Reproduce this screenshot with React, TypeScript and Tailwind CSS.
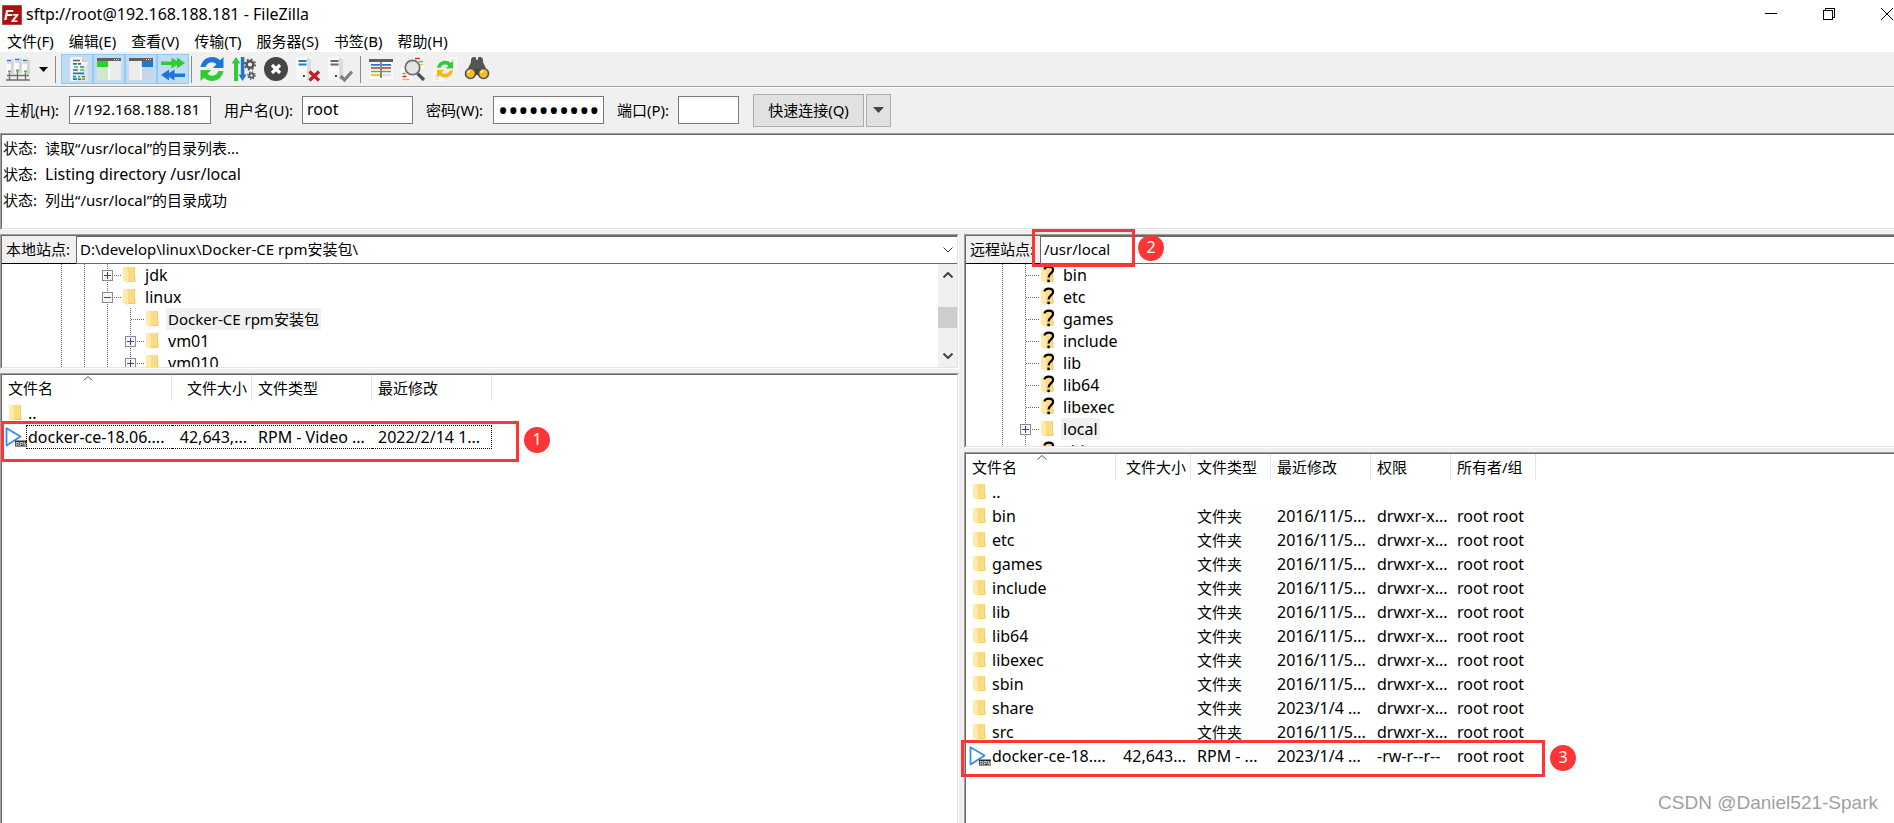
import type { ReactNode } from "react";

const menus = ["文件(F)", "编辑(E)", "查看(V)", "传输(T)", "服务器(S)", "书签(B)", "帮助(H)"];

const logLines = ["读取“/usr/local”的目录列表...", "Listing directory /usr/local", "列出“/usr/local”的目录成功"];

type Guide = "bar" | "tee" | "plus" | "minus";
type Node = { name: string; guides: Guide[]; unknown?: boolean; selected?: boolean };

const localTree: Node[] = [
  { name: "jdk", guides: ["bar", "bar", "plus"] },
  { name: "linux", guides: ["bar", "bar", "minus"] },
  { name: "Docker-CE rpm安装包", guides: ["bar", "bar", "bar", "tee"], selected: true },
  { name: "vm01", guides: ["bar", "bar", "bar", "plus"] },
  { name: "vm010", guides: ["bar", "bar", "bar", "plus"] },
];

const remoteTree: Node[] = [
  { name: "bin", guides: ["bar", "tee"], unknown: true },
  { name: "etc", guides: ["bar", "tee"], unknown: true },
  { name: "games", guides: ["bar", "tee"], unknown: true },
  { name: "include", guides: ["bar", "tee"], unknown: true },
  { name: "lib", guides: ["bar", "tee"], unknown: true },
  { name: "lib64", guides: ["bar", "tee"], unknown: true },
  { name: "libexec", guides: ["bar", "tee"], unknown: true },
  { name: "local", guides: ["bar", "plus"], selected: true },
  { name: "sbin", guides: ["bar", "tee"], unknown: true },
];

type Column = { label: string; width: string; right?: boolean };

const localColumns: Column[] = [
  { label: "文件名", width: "w-[170px]" },
  { label: "文件大小", width: "w-20", right: true },
  { label: "文件类型", width: "w-[120px]" },
  { label: "最近修改", width: "w-[120px]" },
];

const remoteColumns: Column[] = [
  { label: "文件名", width: "w-[150px]" },
  { label: "文件大小", width: "w-[75px]", right: true },
  { label: "文件类型", width: "w-20" },
  { label: "最近修改", width: "w-[100px]" },
  { label: "权限", width: "w-20" },
  { label: "所有者/组", width: "w-[85px]" },
];

const localFiles = [
  ["..", "", "", ""],
  ["docker-ce-18.06....", "42,643,...", "RPM - Video ...", "2022/2/14 1..."],
];

const dir = (name: string, date = "2016/11/5...") => [name, "", "文件夹", date, "drwxr-x...", "root root"];

const remoteFiles = [
  ["..", "", "", "", "", ""],
  dir("bin"),
  dir("etc"),
  dir("games"),
  dir("include"),
  dir("lib"),
  dir("lib64"),
  dir("libexec"),
  dir("sbin"),
  dir("share", "2023/1/4 ..."),
  dir("src"),
  ["docker-ce-18....", "42,643...", "RPM - ...", "2023/1/4 ...", "-rw-r--r--", "root root"],
];

// Latin text is set one size up so that it sits well beside the CJK glyphs
const textSize = (s: string) => (/^[ -~]*$/.test(s) ? "text-base" : "text-[15px]");

function Folder({ unknown }: { unknown?: boolean }) {
  return (
    <svg width="14" height="18" viewBox="0 0 14 18" className="shrink-0 overflow-visible">
      <path d="M3 1h9v10h.5v5H3z" fill="#f5cf6b" />
      <path d="M3 1h8v14H3z" fill="#fbdc83" />
      <path d="M0 1h1.5L5 3.5V17.5L0 15z" fill="#ffeaa7" />
      {unknown && (
        <g>
          <path d="M3.6 3.6C3.6 1.8 5 .7 7.7 .7c2.8 0 4.4 1.3 4.4 3.3 0 3-4.5 3.3-4.5 7.6" fill="none" stroke="#000" strokeWidth="2.2" />
          <path d="M6.4 13.6h2.4v2.6H6.4z" />
        </g>
      )}
    </svg>
  );
}

function RpmFile() {
  return (
    <svg width="22" height="22" viewBox="0 0 22 22" className="shrink-0">
      <path d="M1.500 2.2 L15.500 10.5 L1.500 19.6z" fill="#fff" stroke="#3a8ee6" strokeWidth="1.8" strokeLinejoin="round" />
      <rect x="10" y="14.5" width="12" height="6" fill="#2b2b2b" />
      <text x="10.5" y="19.6" fontSize="5.5" fontWeight="700" fill="#ddd" fontFamily="Liberation Sans, sans-serif">RPM</text>
    </svg>
  );
}

function TreeGuide({ kind }: { kind: Guide }) {
  const dots = { stroke: "#6e6e6e", strokeWidth: 1, strokeDasharray: "1 1" };
  return (
    <svg width="23" height="22" viewBox="0 0 23 22" shapeRendering="crispEdges" className="shrink-0 overflow-visible">
      <path d="M11.5 0v22" {...dots} />
      {kind !== "bar" && <path d="M12 11.5h13" {...dots} />}
      {(kind === "plus" || kind === "minus") && (
        <g>
          <rect x="6.5" y="6.5" width="10" height="10" fill="#f7f7f7" stroke="#8a8a8a" />
          <path d={kind === "plus" ? "M8 11.5h7M11.5 8v7" : "M8 11.5h7"} stroke="#2f4a94" />
        </g>
      )}
    </svg>
  );
}

function Tree({ nodes, className }: { nodes: Node[]; className: string }) {
  return (
    <ul className={`flex-1 ${className}`}>
      {nodes.map((n) => (
        <li key={n.name} className="flex h-[22px] items-center whitespace-nowrap">
          {n.guides.map((g, i) => (
            <TreeGuide key={i} kind={g} />
          ))}
          <span className="ml-1 mr-1.5 flex">
            <Folder unknown={n.unknown} />
          </span>
          <span className={`px-0.5 leading-[22px] ${textSize(n.name)} ${n.selected ? "bg-[#f0f0f0]" : ""}`}>{n.name}</span>
        </li>
      ))}
    </ul>
  );
}

// Sunken 3D frame used around every pane
function Pane({ children, className = "" }: { children: ReactNode; className?: string }) {
  return (
    <div className={`flex flex-col border border-b-white border-l-[#a0a0a0] border-r-white border-t-[#a0a0a0] ${className}`}>
      <div className="relative flex min-h-0 flex-1 flex-col border border-b-[#e3e3e3] border-l-[#696969] border-r-[#e3e3e3] border-t-[#696969] bg-white">
        {children}
      </div>
    </div>
  );
}

function SiteBar({ id, label, path }: { id: string; label: string; path: string }) {
  return (
    <div className="flex h-7 shrink-0">
      <label htmlFor={id} className="w-[74px] shrink-0 overflow-hidden whitespace-nowrap border-b border-black bg-[#f0f0f0] pl-1 leading-[26px]">
        {label}
      </label>
      <div className="relative flex flex-1 border-b border-l border-t border-[#696969]">
        <select id={id} className="w-full appearance-none bg-white pb-0.5 pl-[3px] outline-none">
          <option>{path}</option>
        </select>
        <svg width="10" height="6" viewBox="0 0 10 6" className="pointer-events-none absolute right-1 top-2.5" fill="none" stroke="#444">
          <path d="M.5 .5 5 5 9.5 .5" />
        </svg>
      </div>
    </div>
  );
}

function FileTable({ columns, rows, focused }: { columns: Column[]; rows: string[][]; focused?: boolean }) {
  return (
    <table className="w-0 table-fixed border-separate border-spacing-0 whitespace-nowrap">
      <thead>
        <tr className="h-[26px]">
          {columns.map((c, i) => (
            <th key={c.label} className={`relative border-r border-[#e5e5e5] py-0 pl-1.5 pr-1 font-normal ${c.width} ${c.right ? "text-right" : "text-left"}`}>
              {i === 0 && (
                <svg width="10" height="5" viewBox="0 0 10 5" className="absolute left-1/2 top-px -ml-1" fill="none" stroke="#555">
                  <path d="M.5 4.5 5 .5 9.5 4.5" />
                </svg>
              )}
              {c.label}
            </th>
          ))}
        </tr>
      </thead>
      <tbody>
        {rows.map((r) => {
          const isFile = r[0].startsWith("docker");
          const outlined = focused && isFile;
          return (
            <tr key={r[0]} className="h-6">
              {r.map((cell, i) =>
                i === 0 ? (
                  <td key={i} className="p-0">
                    <div className="flex h-6 items-center">
                      <span className={isFile ? "flex w-6 shrink-0 pl-[3px]" : "flex w-6 shrink-0 pl-[7px]"}>{isFile ? <RpmFile /> : <Folder />}</span>
                      <span
                        className={`flex-1 ${textSize(cell)} ${
                          outlined ? "border-y border-l border-dotted border-black pl-px leading-[22px]" : "pl-0.5 leading-6"
                        }`}
                      >
                        {cell}
                      </span>
                    </div>
                  </td>
                ) : (
                  <td key={i} className="p-0">
                    <div
                      className={`h-6 pl-1.5 ${textSize(cell)} ${columns[i].right ? "pr-[5px] text-right" : ""} ${
                        outlined ? "border-y border-dotted border-black leading-[22px]" : "leading-6"
                      } ${outlined && i === r.length - 1 ? "border-r" : ""}`}
                    >
                      {cell}
                    </div>
                  </td>
                )
              )}
            </tr>
          );
        })}
      </tbody>
    </table>
  );
}

function Mark({ n, box, dot }: { n: number; box: string; dot: string }) {
  return (
    <>
      <div className={`pointer-events-none absolute z-10 border-[3px] border-[#fc3636] ${box}`} />
      <span className={`absolute z-10 flex size-[26px] items-center justify-center rounded-full bg-[#fc3636] pb-0.5 text-base leading-none text-white ${dot}`}>{n}</span>
    </>
  );
}

const G = "#2fcc33";
const B = "#1c78d4";

function Icon({ children }: { children: ReactNode }) {
  return (
    <svg width="26" height="26" viewBox="0 0 26 26" fill="none" className="shrink-0">
      {children}
    </svg>
  );
}

const SiteManagerIcon = () => (
  <Icon>
    {[1, 9, 17].map((x, i) => (
      <g key={x} transform={`translate(0 ${i === 1 ? 0 : 1})`}>
        <path d={`M${x} 1h5l3 2v14h-8z`} fill="#fafafa" />
        <path d={`M${x + 5} 1l3 2v14h-3z`} fill="#d6d6d6" />
        <path d={`M${x + 1} 3.5h4`} stroke={B} strokeWidth="1.6" />
        <path d={`M${x + 1} 6h4`} stroke="#9cc4ec" />
      </g>
    ))}
    <path d="M4.500 17v7M12.500 15v9M20.500 17v7M2 19.500h22M1 24h24" stroke="#707070" strokeWidth="1.4" />
    <path d="M3 15.500h3M11 14.500h3M19 15.500h3" stroke={G} strokeWidth="2" />
  </Icon>
);

const LogIcon = () => (
  <Icon>
    <g transform="translate(3 0)">
      <path d="M3 1h12l6 5v19H3z" fill="#f4f4f4" />
      <path d="M15 1v5h6z" fill="#cfcfcf" />
      <path d="M21 6v19H9z" fill="#e2e2e2" />
      <path d="M6 4.500h7M11 7.800h3M6 14h5" stroke="#606060" strokeWidth="1.700" />
      <path d="M6 7.800h4M13 11h4M6 17.300h11M6 20.600h3M6 23.200h4" stroke={B} strokeWidth="1.700" />
      <path d="M7 11h4M13 14h4M11 20.600h2M15 23.200h3" stroke={G} strokeWidth="1.700" />
      <path d="M15 20.600h3M11 23.200h3" stroke="#606060" strokeWidth="1.400" />
    </g>
  </Icon>
);

const LocalTreeIcon = () => (
  <Icon>
    <path d="M1 2h24v22H1z" fill="#ececec" />
    <path d="M1 2h24v3H1z" fill="#606060" />
    <path d="M18 3.500h5" stroke="#ddd" strokeDasharray="1 1" />
    <path d="M1 5h12v6H1z" fill={G} />
    <path d="M1 11h12v13H1z" fill="#cfe8cf" />
    <path d="M13 5v19" stroke="#fff" strokeWidth="1.500" />
  </Icon>
);

const RemoteTreeIcon = () => (
  <Icon>
    <path d="M1 2h24v22H1z" fill="#ececec" />
    <path d="M1 2h24v3H1z" fill="#606060" />
    <path d="M18 3.500h5" stroke="#ddd" strokeDasharray="1 1" />
    <path d="M13 5h12v6H13z" fill={B} />
    <path d="M13 11h12v13H13z" fill="#c5d6e8" />
    <path d="M13 5v19" stroke="#fff" strokeWidth="1.500" />
  </Icon>
);

const QueueIcon = () => (
  <Icon>
    <path d="M1 5.500h10.500V1.500L17 5V1.500L25 7l-8 5.500V9l-5.500 3.500V9H1z" fill={G} />
    <path d="M25 17.500H14.500v-4L9 17v-3.500L1 19l8 5.500V21l5.500 3.500V21H25z" fill={B} />
  </Icon>
);

const RefreshArrows = ({ top = B, bottom = G }) => (
  <g>
    <path d="M1.500 11C3 4.500 7.500 1 13 1c3.200 0 5.800 1.200 8 3.200L24.500 1v11H13.800l3.700-3.700C16 7 14.700 6.300 13 6.300c-3.200 0-5.300 1.700-6.500 4.700z" fill={top} />
    <path d="M24.500 15C23 21.500 18.500 25 13 25c-3.200 0-5.800-1.200-8-3.200L1.500 25V14h10.700l-3.700 3.700c1.500 1.300 2.800 2 4.500 2 3.200 0 5.300-1.700 6.500-4.700z" fill={bottom} />
  </g>
);

const ProcessIcon = () => (
  <Icon>
    <path d="M5 1l4.500 6.500H7V25H3V7.500H.500z" fill={G} />
    <path d="M11.500 25L7.500 18.500h2.300V1h3.600v17.500h2.300z" fill={B} />
    <circle cx="19" cy="8.500" r="3.300" stroke="#555" strokeWidth="2.400" />
    <circle cx="19" cy="8.500" r="5.100" stroke="#555" strokeWidth="1.800" strokeDasharray="2 2" />
    <circle cx="20.500" cy="19.500" r="2.100" stroke="#555" strokeWidth="1.800" />
    <circle cx="20.500" cy="19.500" r="3.600" stroke="#555" strokeWidth="1.400" strokeDasharray="1.400 1.430" />
  </Icon>
);

const CancelIcon = () => (
  <Icon>
    <circle cx="13" cy="13" r="12" fill="#454545" />
    <path d="M9 9l8 8M17 9l-8 8" stroke="#fff" strokeWidth="3.200" />
  </Icon>
);

const Server = ({ color }: { color: string }) => (
  <g>
    <path d="M1 3l3-2h8v23H1z" fill="#f8f8f8" />
    <path d="M12 1l4 3v20h-4z" fill="#dcdcdc" />
    <path d="M3.500 5h8M3.500 8.500h8" stroke={color} strokeWidth="1.800" />
    <path d="M8 19h2v2H8z" fill="#444" />
  </g>
);

const DisconnectIcon = () => (
  <Icon>
    <Server color={B} />
    <path d="M14.500 15.500l9.500 9M24 15.500l-9.500 9" stroke="#c01f26" strokeWidth="3.200" />
  </Icon>
);

const ReconnectIcon = () => (
  <Icon>
    <Server color="#666" />
    <path d="M13.500 20l4 4 7.500-8.500" stroke="#808080" strokeWidth="3.200" />
  </Icon>
);

const FilterIcon = () => (
  <Icon>
    <path d="M1 3h24v20H1z" fill="#fbfbfb" />
    <path d="M1 3h24v3H1z" fill="#606060" />
    <path d="M3 8.800h9M14 8.800h9" stroke={B} strokeWidth="1.700" />
    <path d="M3 12h9M14 12h9" stroke="#d9262c" strokeWidth="1.700" />
    <path d="M3 15.500h9M14 15.500h9" stroke={G} strokeWidth="1.700" />
    <path d="M3 19h9" stroke="#f5b90f" strokeWidth="1.700" />
    <path d="M14 19h9" stroke="#d9d9d9" strokeWidth="1.500" />
    <path d="M13 5v17" stroke="#606060" strokeWidth="1.500" />
  </Icon>
);

const SearchIcon = () => (
  <Icon>
    <path d="M13 0h11v13H13zM1 12h11v13H1z" fill="#fafafa" />
    <path d="M15 2.500h5M2.500 20.500h4" stroke="#d9262c" strokeWidth="1.600" />
    <path d="M19 5.500h4M2.500 17.500h3" stroke={G} strokeWidth="1.600" />
    <path d="M20 8.500h3M2.500 23.500h7" stroke="#f5b90f" strokeWidth="1.600" />
    <path d="M17.500 17.500L24 24" stroke="#505050" strokeWidth="3.200" />
    <circle cx="12.500" cy="11.500" r="7.200" fill="#e4e4e4" stroke="#6c6c6c" strokeWidth="1.700" />
  </Icon>
);

const CompareIcon = () => (
  <Icon>
    <path d="M14 1h11v12H14zM1 13h11v12H1z" fill="#fafafa" />
    <path d="M3 20h5M3 23h4M19 4h4" stroke="#cfcfcf" />
    <g transform="translate(4 4) scale(.7)">
      <RefreshArrows top={G} bottom="#f5b90f" />
    </g>
  </Icon>
);

const BinocularsIcon = () => (
  <Icon>
    <path d="M7 3l2-2h2.500l1 3h1l1-3H17l2 2v3l6 13H1L7 6z" fill="#555" />
    <path d="M10.500 13h5v6h-5z" fill="#454545" />
    <circle cx="6.500" cy="17.500" r="5" fill="#fcc015" stroke="#505050" strokeWidth="1.600" />
    <circle cx="19.500" cy="17.500" r="5" fill="#fcc015" stroke="#505050" strokeWidth="1.600" />
    <path d="M4 17a2.500 2.500 0 012-2M17 17a2.500 2.500 0 012-2" stroke="#fff" strokeWidth="1.400" />
  </Icon>
);

const toggles = [
  { label: "消息日志", icon: <LogIcon /> },
  { label: "本地目录树", icon: <LocalTreeIcon /> },
  { label: "远程目录树", icon: <RemoteTreeIcon /> },
  { label: "传输队列", icon: <QueueIcon /> },
];

const actions = [
  { label: "刷新", icon: <Icon><RefreshArrows /></Icon> },
  { label: "处理队列", icon: <ProcessIcon /> },
  { label: "取消", icon: <CancelIcon /> },
  { label: "断开", icon: <DisconnectIcon /> },
  { label: "重新连接", icon: <ReconnectIcon /> },
];

const tools = [
  { label: "过滤", icon: <FilterIcon /> },
  { label: "比较", icon: <SearchIcon /> },
  { label: "同步浏览", icon: <CompareIcon /> },
  { label: "搜索", icon: <BinocularsIcon /> },
];

function ToolButton({ label, icon }: { label: string; icon: ReactNode }) {
  return (
    <button aria-label={label} className="flex h-[30px] w-8 items-center justify-center">
      {icon}
    </button>
  );
}

const Divider = () => <span className="h-[27px] w-px bg-[#8c8c8c]" />;

function Titlebar() {
  return (
    <header className="flex h-[29px] items-center pl-0.5">
      <svg width="20" height="20" viewBox="0 0 20 20" fontWeight="700" fontStyle="italic" fontFamily="Liberation Sans, sans-serif">
        <rect x=".5" y=".5" width="19" height="19" fill="#b00d0d" stroke="#8a0808" strokeDasharray="1 1" />
        <text x="2" y="15" fontSize="15" fill="#fff">F</text>
        <text x="9.500" y="16.500" fontSize="14" fill="#fff">z</text>
      </svg>
      <h1 className="flex-1 pb-0.5 pl-1 text-base leading-5">sftp://root@192.168.188.181 - FileZilla</h1>
      <div className="flex gap-[46px] pb-0.5 pr-px">
        <button aria-label="最小化">
          <svg width="12" height="12" stroke="#000" shapeRendering="crispEdges"><path d="M0 5.500h12" /></svg>
        </button>
        <button aria-label="还原">
          <svg width="12" height="12" fill="none" stroke="#000" shapeRendering="crispEdges"><path d="M.5 2.500h9v9h-9zM2.500 2.500v-2h9v9h-2" /></svg>
        </button>
        <button aria-label="关闭">
          <svg width="12" height="12" stroke="#000"><path d="M0 0l12 12M12 0L0 12" /></svg>
        </button>
      </div>
    </header>
  );
}

const inputClass = "h-7 border border-[#7a7a7a] bg-white px-1 outline-none";

function QuickConnect() {
  return (
    <form className="flex h-[45px] items-center border-t border-white pl-[5px]">
      <label htmlFor="host" className="w-16 shrink-0">主机(H):</label>
      <input id="host" defaultValue="//192.168.188.181" className={`${inputClass} w-[142px] pb-0.5`} />
      <label htmlFor="user" className="w-[91px] shrink-0 pl-[13px]">用户名(U):</label>
      <input id="user" defaultValue="root" className={`${inputClass} w-[111px] pb-0.5 text-base`} />
      <label htmlFor="pass" className="w-20 shrink-0 pl-[13px]">密码(W):</label>
      <input id="pass" type="password" defaultValue="0123456789" className={`${inputClass} w-[111px] text-[27px]`} />
      <label htmlFor="port" className="w-[74px] shrink-0 pl-[13px]">端口(P):</label>
      <input id="port" className={`${inputClass} w-[61px]`} />
      <button type="button" className="ml-3.5 h-[33px] w-[111px] border border-[#adadad] bg-[#e1e1e1]">快速连接(Q)</button>
      <button type="button" aria-label="历史记录" className="ml-0.5 flex h-[33px] w-[25px] items-center justify-center border border-[#adadad] bg-[#e1e1e1]">
        <svg width="11" height="6"><path d="M0 0h11L5.500 6z" fill="#444" /></svg>
      </button>
    </form>
  );
}

export default function App() {
  return (
    <div className="relative flex min-h-screen flex-col overflow-hidden bg-[#f0f0f0] font-['Noto_Sans','Noto_Sans_CJK_SC',sans-serif] text-[15px] leading-5 text-black">
      <div className="bg-white">
        <Titlebar />
        <nav className="flex h-[23px] items-center gap-[15px] pl-[7px]">
          {menus.map((m) => (
            <button key={m}>{m}</button>
          ))}
        </nav>
      </div>

      <div className="flex h-[35px] items-center border-b border-[#a0a0a0] pl-[5px]">
        <button aria-label="站点管理器"><SiteManagerIcon /></button>
        <button aria-label="选择站点" className="ml-2 mr-[7px]">
          <svg width="9" height="5"><path d="M0 0h9L4.500 5z" fill="#000" /></svg>
        </button>
        <Divider />
        <div className="ml-[5px] mr-0.5 flex">
          {toggles.map((t) => (
            <button key={t.label} aria-label={t.label} aria-pressed="true" className="flex h-[30px] w-8 items-center justify-center border border-[#90c8f6] bg-[#c0dcf3]">
              {t.icon}
            </button>
          ))}
        </div>
        <Divider />
        <div className="ml-1 mr-1 flex">
          {actions.map((t) => <ToolButton key={t.label} {...t} />)}
        </div>
        <Divider />
        <div className="ml-1 flex">
          {tools.map((t) => <ToolButton key={t.label} {...t} />)}
        </div>
      </div>

      <QuickConnect />

      <Pane className="-mr-5 mt-px h-[97px]">
        <ul>
          {logLines.map((line) => (
            <li key={line} className="flex h-[26px] items-center pl-px">
              <span className="w-[42px]">状态:</span>
              <span className={textSize(line)}>{line}</span>
            </li>
          ))}
        </ul>
      </Pane>

      <main className="-mb-1 -mr-5 mt-1 grid flex-1 grid-cols-[959fr_950fr] gap-x-[5px]">
        <section className="flex flex-col gap-1">
          <Pane className="h-[135px]">
            <SiteBar id="local-site" label="本地站点:" path="D:\develop\linux\Docker-CE rpm安装包\" />
            <div className="flex min-h-0 flex-1 overflow-hidden">
              <Tree nodes={localTree} className="pl-12" />
              <div className="flex w-[19px] flex-col items-center justify-between bg-[#f0f0f0] py-2">
                <svg width="10" height="6" fill="none" stroke="#444" strokeWidth="2"><path d="M.5 5.500 5 1 9.500 5.500" /></svg>
                <span className="mt-1 h-[21px] w-full bg-[#cdcdcd]" />
                <svg width="10" height="6" fill="none" stroke="#444" strokeWidth="2"><path d="M.5 .5 5 5 9.500 .5" /></svg>
              </div>
            </div>
          </Pane>
          <Pane className="flex-1">
            <FileTable columns={localColumns} rows={localFiles} focused />
            <Mark n={1} box="-left-px top-[46px] h-[41px] w-[518px]" dot="left-[522px] top-[52px]" />
          </Pane>
        </section>

        <section className="flex flex-col gap-1">
          <Pane className="h-[214px]">
            <SiteBar id="remote-site" label="远程站点:" path="/usr/local" />
            <div className="flex min-h-0 flex-1 overflow-hidden">
              <Tree nodes={remoteTree} className="pl-[25px]" />
            </div>
            <Mark n={2} box="left-[66px] -top-[7px] h-[38px] w-[103px]" dot="left-[172px] -top-px" />
          </Pane>
          <Pane className="flex-1">
            <FileTable columns={remoteColumns} rows={remoteFiles} />
            <Mark n={3} box="-left-[5px] top-[286px] h-[37px] w-[584px]" dot="left-[584px] top-[291px]" />
          </Pane>
        </section>
      </main>

      <p className="absolute bottom-2 right-4 font-['Liberation_Sans',sans-serif] text-[19px] leading-6 text-[#9f9f9f]">CSDN @Daniel521-Spark</p>
    </div>
  );
}
